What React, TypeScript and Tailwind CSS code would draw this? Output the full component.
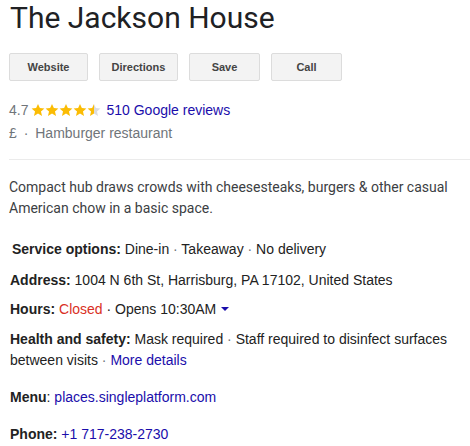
import React from "react";

const Star = ({ fill }: { fill: "full" | "half" }) => (
  <svg width="14" height="14" viewBox="0 0 24 24" className="inline-block">
    <defs>
      <linearGradient id="half">
        <stop offset="50%" stopColor="#fbbc04" />
        <stop offset="50%" stopColor="#dadce0" />
      </linearGradient>
    </defs>
    <path
      d="M12 1.5l3.2 7.1 7.8.7-5.9 5.2 1.8 7.6L12 18.1l-6.9 4 1.8-7.6L1 9.3l7.8-.7z"
      fill={fill === "full" ? "#fbbc04" : "url(#half)"}
    />
  </svg>
);

export default function App() {
  const arial = { fontFamily: "'Liberation Sans', Arial, sans-serif" };
  return (
    <div className="w-[470px] h-[446px] bg-white overflow-hidden" style={arial}>
      <div className="pl-[9px]">
        <h1
          className="text-[30px] leading-[36px] text-[#202124] pt-[0px] pl-[1px]"
          style={{ fontFamily: "Roboto, 'Open Sans', sans-serif" }}
        >
          The Jackson House
        </h1>
        <div className="flex gap-[11px] mt-[17px]">
          {[
            ["Website", 79],
            ["Directions", 79],
            ["Save", 71],
            ["Call", 71],
          ].map(([l, w]) => (
            <div
              key={l as string}
              className="h-[28px] flex items-center justify-center bg-[#f3f3f3] border border-[#dcdcdc] rounded-[2px] text-[11px] font-bold text-[#444]"
              style={{ width: w as number }}
            >
              {l}
            </div>
          ))}
        </div>
        <div className="mt-[20px] flex items-center text-[14px] leading-[18px]">
          <span className="text-[#70757a]">4.7</span>
          <span className="flex ml-[3px] mr-[5px]">
            <Star fill="full" />
            <Star fill="full" />
            <Star fill="full" />
            <Star fill="full" />
            <Star fill="half" />
          </span>
          <span className="text-[#1a0dab]">510 Google reviews</span>
        </div>
        <div className="mt-[5px] text-[14px] leading-[18px] text-[#70757a]">
          £ <span className="mx-[3px]">·</span> Hamburger restaurant
        </div>
        <div className="mt-[17px] h-px bg-[#ebebeb]" />
        <p
          className="mt-[17px] text-[14px] leading-[21px] text-[#3c4043] pr-[20px]"
          style={{ fontFamily: "Roboto, sans-serif" }}
        >
          Compact hub draws crowds with cheesesteaks, burgers &amp; other casual American chow in a basic space.
        </p>
        <div className="text-[14px] leading-[20px] text-[#222]">
          <div className="mt-[20px] pl-[3px]">
            <b>Service options:</b> Dine-in <span className="text-[#70757a]">·</span> Takeaway{" "}
            <span className="text-[#70757a]">·</span> No delivery
          </div>
          <div className="mt-[11px] pl-[1px]">
            <b>Address:</b> 1004 N 6th St, Harrisburg, PA 17102, United States
          </div>
          <div className="mt-[9px] pl-[1px] flex items-center">
            <b>Hours:</b>&nbsp;<span className="text-[#d93025]">Closed</span>&nbsp;· Opens 10:30AM
            <svg width="10" height="10" viewBox="0 0 10 10" className="ml-[4px]">
              <path d="M1 3h8L5 7z" fill="#1a0dab" />
            </svg>
          </div>
          <div className="mt-[10px] pl-[1px] leading-[21px] pr-[20px]">
            <b>Health and safety:</b> Mask required <span className="text-[#70757a]">·</span> Staff required to
            disinfect surfaces between visits <span className="text-[#70757a]">·</span>{" "}
            <span className="text-[#1a0dab]">More details</span>
          </div>
          <div className="mt-[16px] pl-[1px]">
            <b>Menu</b>: <span className="text-[#1a0dab]">places.singleplatform.com</span>
          </div>
          <div className="mt-[17px] pl-[1px]">
            <b>Phone:</b> <span className="text-[#1a0dab]">+1 717-238-2730</span>
          </div>
        </div>
      </div>
    </div>
  );
}
